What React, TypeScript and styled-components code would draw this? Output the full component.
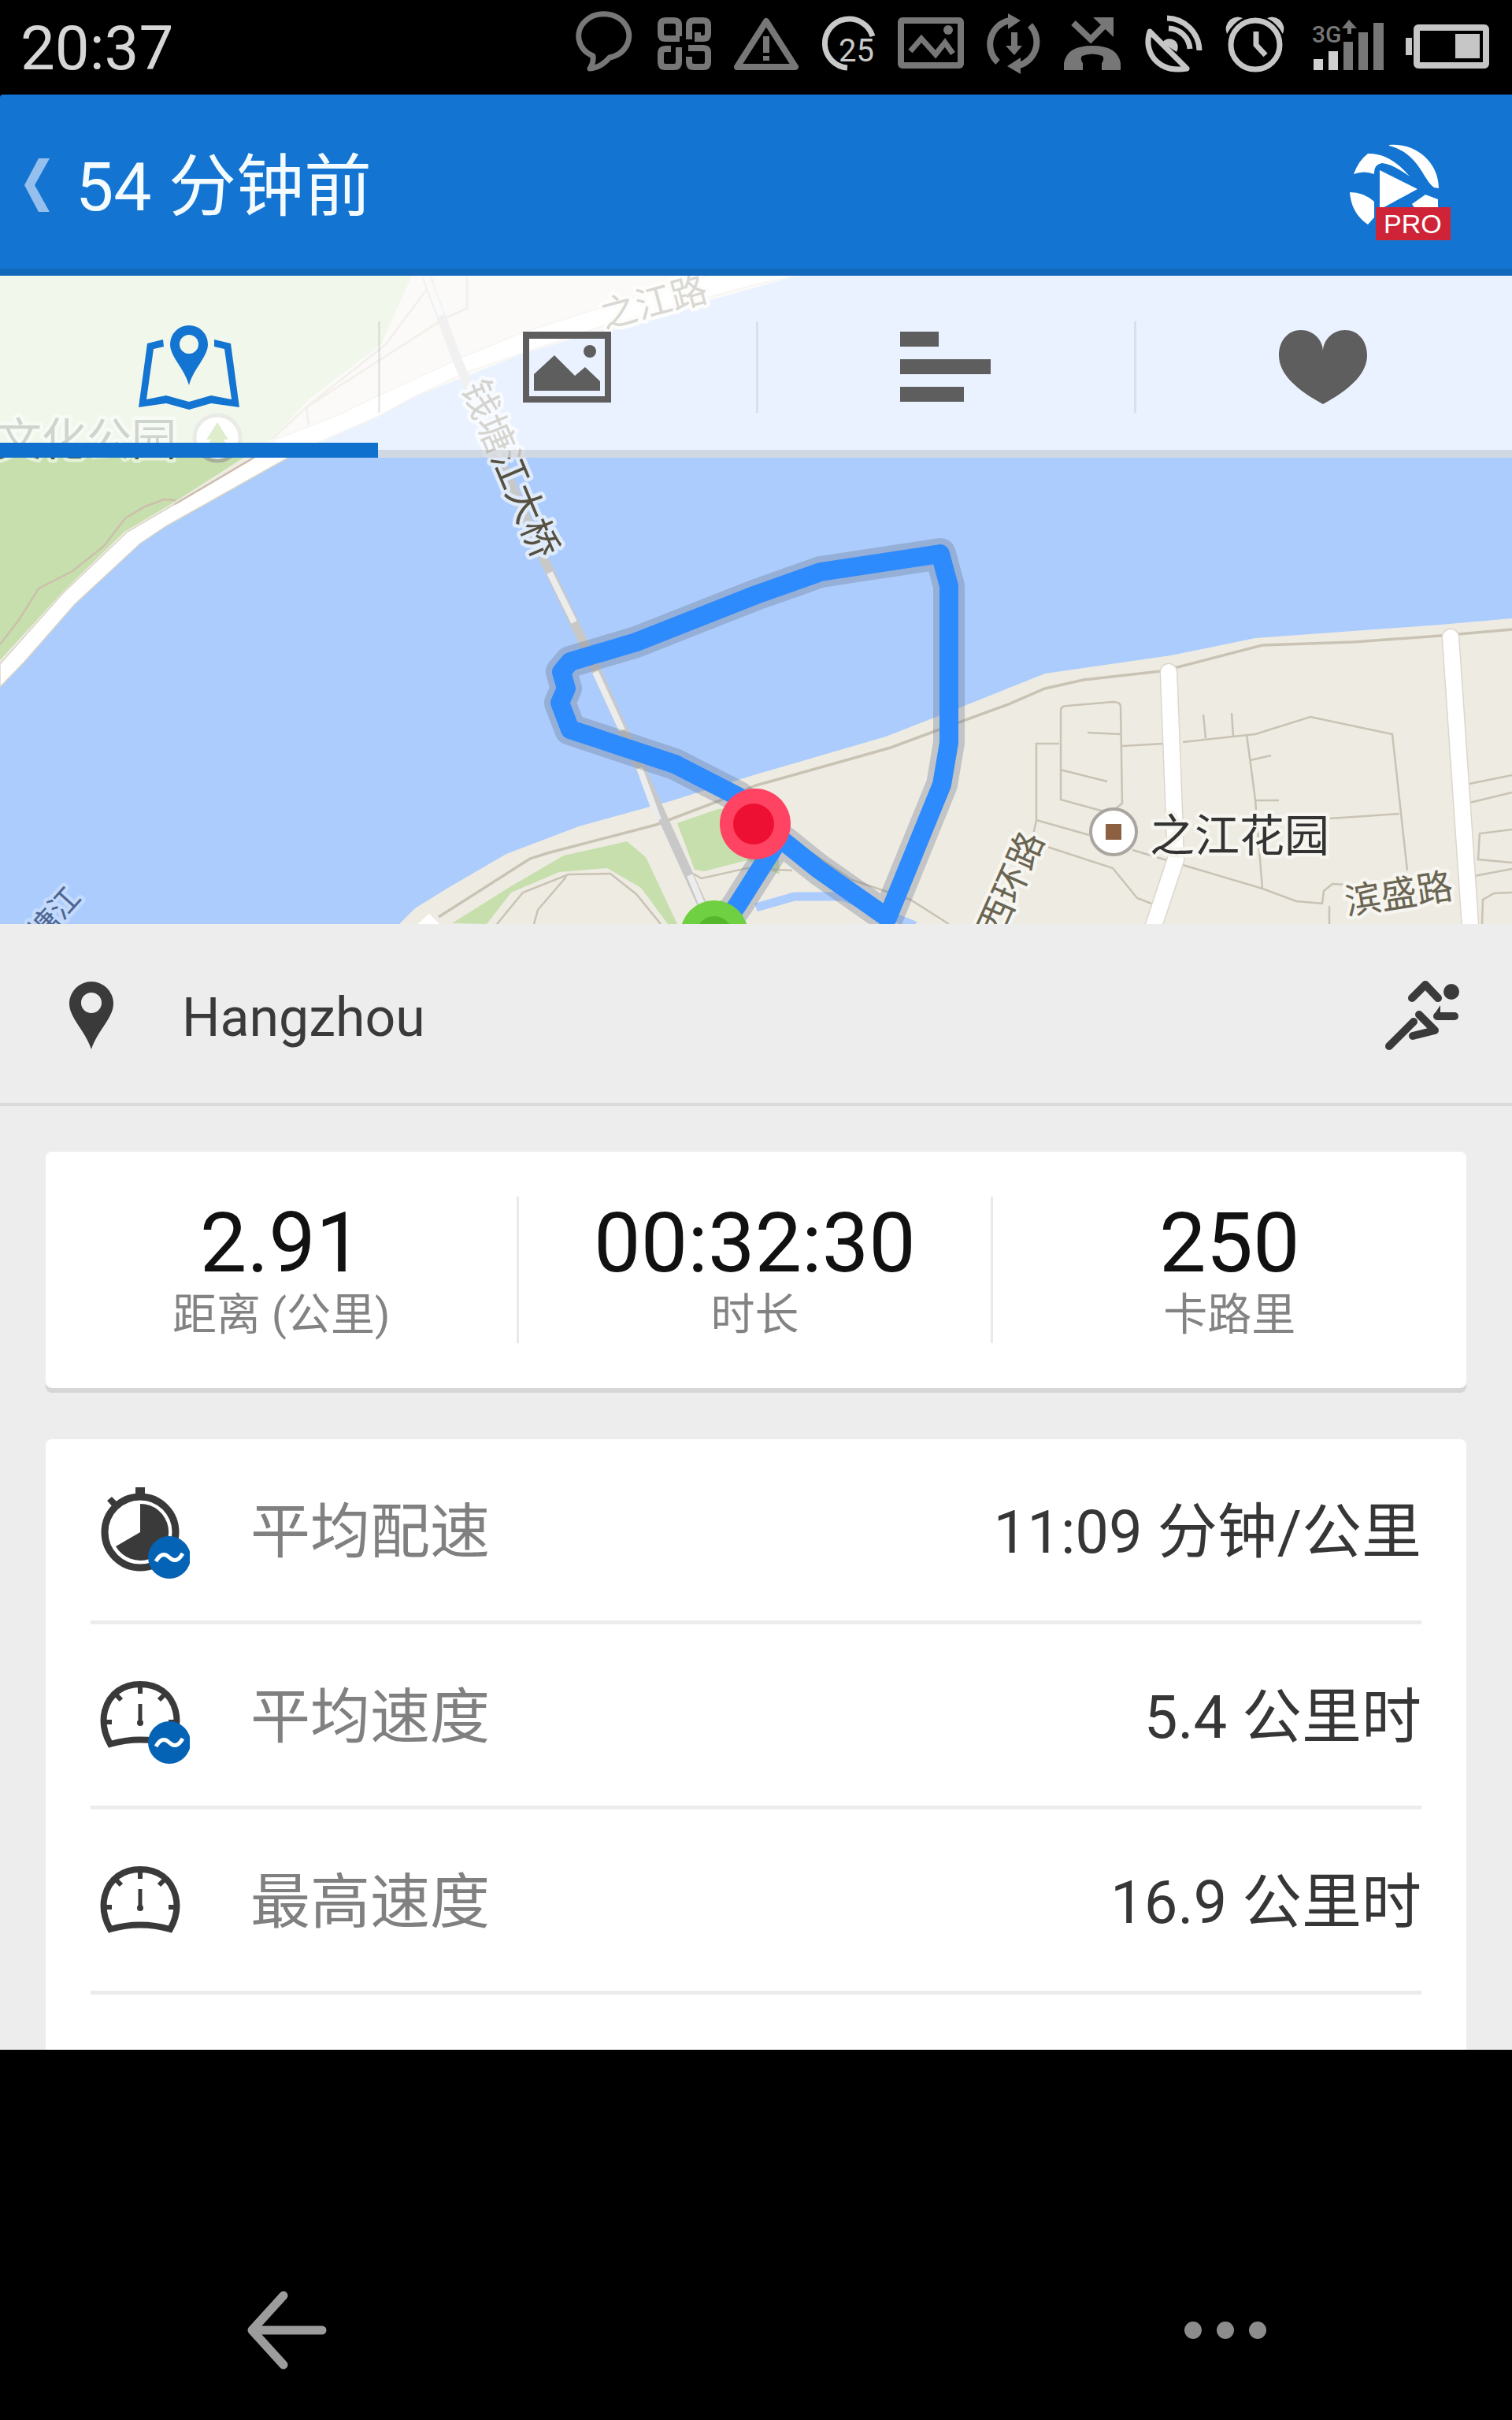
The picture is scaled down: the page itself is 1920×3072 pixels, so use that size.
import React from "react";
import styled, { createGlobalStyle } from "styled-components";

const GlobalStyle = createGlobalStyle`
  *, *::before, *::after { box-sizing: border-box; }
  body { margin: 0; background: #000; }
  button { font: inherit; border: 0; padding: 0; background: none; color: inherit; }
  h1, dl, dt, dd, p { margin: 0; font-weight: 400; }
  svg { display: block; }
`;

const Screen = styled.div`
  display: flex;
  flex-direction: column;
  min-height: 100vh;
  background: #000;
  font-family: Roboto, "Noto Sans CJK SC", sans-serif;
`;

/* ---------- status bar ---------- */

const StatusBar = styled.header`
  display: flex;
  align-items: center;
  justify-content: space-between;
  height: 120px;
  padding: 0 29px 0 26px;
`;

const Clock = styled.time`
  color: #d6d6d6;
  font-size: 78px;
  line-height: 92px;
  padding-top: 4px;
`;

const StatusIcons = styled.div`
  display: flex;
  align-items: center;
  gap: 29px;
  margin-bottom: 10px;

  svg {
    height: 80px;
    overflow: visible;
    fill: none;
    stroke: #777;
    stroke-width: 8;
  }
`;

const StatusGlyphs = () => (
  <StatusIcons>
    <svg width="72" viewBox="734 15 72 80">
      <path d="M749 87 Q754 80 753 71 A32 28 0 1 1 774 73 Q763 86 749 87Z" strokeWidth="7" strokeLinejoin="round" />
    </svg>
    <svg width="67" viewBox="835 15 67 80">
      <path d="M852 37 V45 M862 45 V32 Q862 26 856 26 H845 Q839 26 839 32 V43 Q839 49 845 49 H864" stroke="none" />
      <path d="M862 46 V32 Q862 26 856 26 H845 Q839 26 839 32 V43 Q839 49 845 49 H863" />
      <path d="M886 41 V49 H893 Q899 49 899 43 V32 Q899 26 893 26 H881 Q875 26 875 32 V50" />
      <path d="M852 62 H845 Q839 62 839 68 V79 Q839 85 845 85 H856 Q862 85 862 79 V60" />
      <path d="M874 61 H893 Q899 61 899 67 V79 Q899 85 893 85 H881 Q875 85 875 79 V72" />
    </svg>
    <svg width="84" viewBox="931 15 84 80">
      <path d="M973 27 L1010 85 H936 Z" strokeLinejoin="round" />
      <path d="M973 46 V67 M973 71 V77" />
    </svg>
    <svg width="67" viewBox="1044 15 67 80" style={{ stroke: "#c9c9c9" }}>
      <path d="M1108 46 A31 31 0 1 0 1076 86" strokeWidth="7" />
      <text x="1065" y="78" fill="#c9c9c9" stroke="none" fontSize="40">25</text>
    </svg>
    <svg width="83" viewBox="1140 15 83 80">
      <rect x="1144" y="26" width="76" height="57" rx="2" />
      <path d="M1156 65 L1170 49 L1188 69 L1200 54 L1210 68" strokeWidth="7" />
      <circle cx="1204" cy="38" r="6" fill="#777" stroke="none" />
    </svg>
    <svg width="70" viewBox="1252 15 70 80">
      <path d="M1267 79 A31 31 0 0 1 1282 26 M1308 32 A31 31 0 0 1 1294 83" />
      <path d="M1280 17 L1296 26 L1280 37Z M1296 73 V94 L1279 84Z M1277 58 H1298 L1288 70Z" fill="#777" stroke="none" />
      <path d="M1288 41 V60" />
    </svg>
    <svg width="73" viewBox="1351 15 73 80">
      <path d="M1363 29 L1385 50 L1406 29" />
      <path d="M1388 22 H1414 V47Z" fill="#777" stroke="none" />
      <path d="M1351 89 V80 Q1355 58 1387 58 Q1419 58 1423 80 V89 H1399 V80 Q1403 75 1400 71 Q1387 66 1374 71 Q1371 75 1375 80 V89Z" fill="#777" stroke="none" />
    </svg>
    <svg width="74" viewBox="1453 15 74 80" style={{ stroke: "#c6c6c6" }}>
      <path d="M1460 40 L1507 87 Q1480 92 1465 74 Q1454 59 1460 40Z" strokeWidth="7" strokeLinejoin="round" />
      <path d="M1476 54 A9 9 0 1 1 1494 66 Z" fill="#c6c6c6" stroke="none" />
      <path d="M1482 23 A42 42 0 0 1 1523 64 M1484 36 A28 28 0 0 1 1511 62" strokeWidth="7" />
    </svg>
    <svg width="76" viewBox="1556 15 76 80" style={{ stroke: "#c6c6c6" }}>
      <circle cx="1594" cy="57" r="31" strokeWidth="7" />
      <path d="M1595 40 V57 L1607 70" strokeWidth="7" />
      <path d="M1558 43 Q1554 33 1562 25 Q1570 19 1578 23 Q1566 29 1558 43Z M1629 43 Q1633 33 1625 25 Q1617 19 1609 23 Q1621 29 1629 43Z" fill="#c6c6c6" stroke="none" />
    </svg>
    <svg width="95" viewBox="1661 15 95 80">
      <g stroke="none" fill="#777">
        <path d="M1706 53 H1718 V89 H1706Z M1725 41 H1737 V89 H1725Z M1744 29 H1757 V89 H1744Z M1713 25 L1723 36 H1716 V43 H1711 V36 H1704Z" />
        <text x="1666" y="54" fontSize="30" fontWeight="500">
          3G
        </text>
        <path d="M1668 75 H1680 V89 H1668Z M1687 65 H1699 V89 H1687Z" fill="#cfcfcf" />
      </g>
    </svg>
    <svg width="106" viewBox="1785 15 106 80" style={{ stroke: "#c6c6c6" }}>
      <rect x="1799" y="35" width="88" height="48" rx="2" />
      <path d="M1785 48 H1793 V70 H1785Z M1848 43 H1879 V74 H1848Z" fill="#c6c6c6" stroke="none" />
    </svg>
  </StatusIcons>
);

/* ---------- title bar ---------- */

const TitleBar = styled.div`
  display: flex;
  align-items: center;
  justify-content: space-between;
  height: 230px;
  padding: 8px 78px 0 31px;
  background: #1375d1;
  border-bottom: 9px solid #1268ba;
  border-top-left-radius: 4px;

  > svg {
    margin-top: 20px;
  }
`;

const BackLink = styled.a`
  display: flex;
  align-items: center;
  gap: 33px;
  color: #f4fbff;
  text-decoration: none;
`;

const Title = styled.h1`
  font-size: 86px;
  line-height: 104px;
  padding-top: 6px;
`;

const Logo = () => (
  <svg width="128" height="124" viewBox="1714 182 128 124">
    <g fill="#fff">
      <path d="M1764 183 C1798 180 1827 205 1827 238 L1821 237 C1806 226 1802 194 1764 184Z" />
      <path d="M1719 220 Q1725 203 1737 194 Q1765 193 1790 223 Q1768 207 1755 206 Q1744 208 1745 220 Q1732 215 1719 220Z" />
      <path d="M1752 215 L1800 239 L1752 265Z" />
      <path d="M1714 243 Q1732 243 1745 255 V275 L1737 284 Q1716 270 1714 243Z" />
      <path d="M1793 258 L1810 246 L1826 252 V264 H1797Z" />
    </g>
    <rect x="1747" y="262" width="95" height="42" fill="#cf2437" />
    <text x="1757" y="295" fill="#fff" fontSize="34" fontFamily="Liberation Sans">PRO</text>
  </svg>
);

/* ---------- map and tabs ---------- */

const MapSection = styled.section`
  position: relative;
  overflow: hidden;
  background: #abccfd;

  > svg {
    width: 100%;
    height: auto;
  }
`;

const Tabs = styled.nav`
  position: absolute;
  inset: 0 0 auto 0;
  display: grid;
  grid-template-columns: repeat(4, 1fr);
`;

const Tab = styled.button<{ $active?: boolean }>`
  display: flex;
  align-items: center;
  justify-content: center;
  height: 231px;
  background: rgba(255, 255, 255, 0.75);
  border-bottom: ${(p) => (p.$active ? "19px solid #1070cd" : "10px solid rgba(150, 155, 160, 0.3)")};
  color: ${(p) => (p.$active ? "#1375d1" : "#5e5e5e")};
  padding-top: ${(p) => (p.$active ? "19px" : "10px")};

  &:not(:first-child)::before {
    content: "";
    width: 3px;
    height: 116px;
    margin-right: auto;
    background: rgba(120, 130, 150, 0.16);
  }

  &:not(:first-child)::after {
    content: "";
    width: 3px;
    margin-left: auto;
  }

  svg {
    fill: currentColor;
  }
`;

const road = "#c9c3b4";

const routePath =
  "M907 1190 L937 1148 L985 1072 L959 1030 L937 1011 L857 970 L724 926 L711 892 L719 874 L713 853 L724 840 L808 815 L960 755 L1042 726 L1194 703 L1205 744 V943 L1196 996 L1127 1165 L1040 1104 L985 1060";

const RouteMap = () => (
  <svg viewBox="0 350 1920 823" role="img" aria-label="路线地图" fontFamily='"Noto Sans CJK SC", sans-serif'>
    <rect y="350" width="1920" height="823" fill="#abccfd" />

    {/* north bank */}
    <path d="M0 350 H1012 L960 365 L771 417 L661 450 L594 477 L527 503 L481 528 L392 567 L364 582 L211 668 L178 690 L95 767 L31 840 L0 872Z" fill="#eeebe3" />
    <path d="M0 350 H523 L484 437 L392 507 L346 557 L306 583 L222 637 L158 675 L78 753 L0 838Z" fill="#c6dfac" />
    <path d="M0 843 L80 753 L162 675 L227 637 L318 583 L352 557 L429 527 L481 502 L588 453 L661 423 L765 390 L876 357 L900 350 H1012 L960 361 L771 412 L594 472 L527 503 L481 528 L392 567 L364 582 L211 668 L178 690 L95 767 L31 840 L0 872Z" fill="#fff" stroke="#d9d5c6" strokeWidth="1.5" />
    <g fill="none" stroke="#cdbfae" strokeWidth="2.5">
      <path d="M223 635 L208 634 L184 643 L159 658 L132 693 L92 725 L49 747 L24 787 L0 818" />
      <path d="M551 355 L490 437 L389 517 L346 557 M593 352 V392 L566 403 L490 452 L389 517 L392 540" />
      <path d="M324 580 L222 640" />
    </g>

    {/* south bank */}
    <path d="M507 1173 L527 1153 L569 1127 L643 1084 L735 1049 L851 1017 L960 983 L1125 935 L1217 899 L1327 855 L1487 832 L1594 810 L1829 793 L1920 785 V1173Z" fill="#eeebe3" />
    <path d="M574 1172 L649 1125 L716 1086 L796 1068 L820 1088 L860 1173 H848 L814 1127 L771 1102 L710 1107 L649 1133 L618 1173Z M860 1045 L912 1027 L985 1020 L990 1110 L949 1092 L894 1106 L882 1104Z" fill="#c6dfac" />
    <path d="M530 1173 L545 1160 L558 1173Z" fill="#fff" />
    <path d="M960 1152 L1009 1138 L1070 1138 L1162 1175" fill="none" stroke="#abccfd" strokeWidth="11" />
    <path d="M557 1164 L673 1090 L695 1083 L833 1047 L912 1017 L960 997 L1046 973 L1131 949 L1193 926 L1278 895 L1327 874 L1376 863 L1474 852 L1499 846 L1603 819 L1719 815 L1829 807 L1920 799" fill="none" stroke={road} strokeWidth="3.5" />
    <g fill="none" stroke={road} strokeWidth="2.5">
      <path d="M631 1173 L664 1133 L722 1110 L775 1109 L808 1135 L839 1173 M719 1113 L683 1155 L678 1173" />
      <path d="M848 1045 L876 1107 L891 1115 L949 1102 L1006 1105" />
      <path d="M1021 1076 L1082 1117 L1156 1142 L1205 1173" />
      <path d="M1347 902 Q1347 896 1355 896 L1413 891 Q1423 891 1423 897 L1425 1020 L1413 1029 H1398 L1347 1015Z" />
      <path d="M1381 930 L1423 932 M1346 977 L1406 992 M1425 947 L1477 944 M1345 944 H1316 V1041 L1312 1060 M1316 1041 L1383 1060" />
      <path d="M1330 1075 L1413 1102 L1444 1140 L1462 1147 M1438 1079 L1603 1128 L1646 1144 L1680 1147" />
      <path d="M1502 942 L1594 932 L1664 910 L1768 932 L1787 1105 M1528 907 L1531 937 M1564 905 L1566 935" />
      <path d="M1583 932 L1594 1015 L1603 1128 M1588 965 L1614 959 M1595 1016 H1624 M1689 1039 L1777 1033" />
      <path d="M1688 1173 V1150 M1679 1147 L1681 1131 L1692 1122 L1740 1125" />
      <path d="M1866 995 L1920 984 M1866 1019 L1920 1006 M1920 1053 L1879 1058 L1877 1091 L1920 1095 M1872 1112 L1920 1103 M1882 1173 L1883 1142 L1897 1134 L1920 1133" />
    </g>
    <g fill="none" strokeLinecap="round">
      <path d="M1484 853 L1491 1034 L1493 1091 L1465 1175 M1842 809 L1867 1175" stroke="#dcd7ca" strokeWidth="23" />
      <path d="M1484 853 L1491 1034 L1493 1091 L1465 1175 M1842 809 L1867 1175" stroke="#fff" strokeWidth="20" />
    </g>

    {/* bridge */}
    <g fill="none" stroke="#c8c8c8" strokeWidth="12">
      <path d="M541 350 L579 453 L686 700 L744 822 L891 1147" />
      <path d="M541 350 L560 400 M596 490 L640 590 M698 727 L729 790 M756 853 L790 927 M812 975 L836 1041 M876 1111 L891 1147" stroke="#ececec" strokeWidth="8" />
    </g>

    {/* place labels */}
    <g stroke="#dfeafa" strokeWidth="9" paintOrder="stroke" strokeLinejoin="round" textAnchor="middle" fill="#55503f" fontSize="48">
      <text transform="translate(648 595) rotate(67)" y="17">钱塘江大桥</text>
      <g stroke="#f6f5ef" fill="#6a6553" fontSize="46">
        <text transform="translate(830 383) rotate(-15)" y="17">之江路</text>
        <text transform="translate(1283 1121) rotate(-66)" y="17">西环路</text>
        <text transform="translate(1776 1134) rotate(-9)" y="17">滨盛路</text>
      </g>
      <text transform="translate(56 1174) rotate(-48)" y="14" fontSize="38" fill="#4e6591" stroke="#c3dafc">钱塘江</text>
    </g>
    <g stroke="#f6f5ef" strokeWidth="9" paintOrder="stroke" strokeLinejoin="round" fontSize="57">
      <text x="-4" y="578" fill="#3b5a3a" stroke="#e4f0d8">文化公园</text>
      <text x="1460" y="1081" fill="#333">之江花园</text>
    </g>
    <circle cx="276" cy="556" r="29" fill="#fff" stroke="#a8b09c" strokeWidth="5" />
    <path d="M276 536 L290 558 H284 L291 570 H279 V577 H273 V570 H261 L268 558 H262Z" fill="#7fb83a" />
    <circle cx="1414" cy="1056" r="29" fill="#fff" stroke="#a9a6a0" strokeWidth="4" />
    <rect x="1404" y="1046" width="20" height="20" fill="#8e6042" />

    {/* recorded route */}
    <g fill="none" strokeLinejoin="round">
      <path d={routePath} stroke="rgba(110, 120, 140, 0.34)" strokeWidth="40" />
      <path d={routePath} stroke="#2e8bfd" strokeWidth="24" />
    </g>
    <circle cx="959" cy="1046" r="45" fill="#ff4463" />
    <circle cx="957" cy="1046" r="26" fill="#ee1032" />
    <circle cx="907" cy="1186" r="43" fill="#6fd041" />
    <circle cx="907" cy="1186" r="23" fill="#55b82c" />
  </svg>
);

/* ---------- summary ---------- */

const Content = styled.main`
  background: #ededed;
  color: #3a3a3a;
`;

const LocationRow = styled.div`
  display: flex;
  align-items: center;
  height: 231px;
  padding: 4px 67px 0 88px;
  border-bottom: 4px solid #dadada;
  font-size: 68px;
  line-height: 80px;
`;

const City = styled.p`
  flex: 1;
  padding: 6px 0 0 87px;
`;

const Card = styled.dl`
  margin: 58px 58px 0;
  background: #fff;
  border-radius: 8px;
`;

const SummaryCard = styled(Card)`
  display: grid;
  grid-template-columns: repeat(3, 1fr);
  padding: 57px 0;
  box-shadow: 0 6px 0 #d6d6d6;
`;

const Stat = styled.div`
  display: flex;
  flex-direction: column-reverse;
  align-items: center;
  justify-content: flex-end;
  height: 186px;

  &:not(:last-child) {
    border-right: 3px solid #e9e9e9;
  }

  dd {
    color: #111;
    font-size: 106px;
    line-height: 118px;
  }

  dt {
    color: #838383;
    font-size: 56px;
    line-height: 64px;
  }
`;

const DetailCard = styled(Card)`
  margin-top: 65px;
  padding: 0 57px 70px;
  border-radius: 8px 8px 0 0;
`;

const Detail = styled.div`
  display: flex;
  align-items: center;
  height: 235px;
  padding-top: 6px;
  border-bottom: 5px solid #ececec;
  font-size: 76px;
  line-height: 90px;

  svg {
    margin-left: 10px;
  }

  dt {
    flex: 1;
    padding-left: 77px;
    color: #808080;
  }

  dd {
    color: #363636;
  }
`;

const Badge = () => (
  <g>
    <circle cx="88" cy="99" r="27" fill="#0463b4" />
    <path d="M71 104 Q79 90 88 99 Q97 108 105 94" fill="none" stroke="#fff" strokeWidth="5" />
  </g>
);

const StopwatchIcon = () => (
  <svg width="116" height="138" viewBox="-2 -2 116 138">
    <circle cx="51" cy="67" r="45" fill="none" stroke="#3a3a3a" strokeWidth="9" />
    <path d="M45 10 H57 V24 H45Z M9 27 L15 22 L24 31 L18 37Z" fill="#3a3a3a" />
    <path d="M51 67 V31 A36 36 0 1 1 20 85Z" fill="#3a3a3a" />
    <Badge />
  </svg>
);

const GaugeIcon = ({ average }: { average?: boolean }) => (
  <svg width="116" height="138" viewBox="-2 -2 116 138">
    <g fill="none" stroke="#3a3a3a">
      <path d="M13 101 Q1 80 6 59 C12 36 30 25 51 25 C73 25 90 36 96 59 Q101 80 89 101 Q51 90 13 101Z" strokeWidth="8" />
      <path d="M51 27 V37 M5 73 H15 M87 73 H97 M21 39 L27 45 M81 39 L75 45" strokeWidth="6" />
      <path d="M51 50 V72" strokeWidth="5" />
    </g>
    <circle cx="51" cy="74" r="4" fill="#3a3a3a" />
    {average && <Badge />}
  </svg>
);

const details = [
  { label: "平均配速", value: "11:09 分钟/公里", icon: <StopwatchIcon /> },
  { label: "平均速度", value: "5.4 公里时", icon: <GaugeIcon average /> },
  { label: "最高速度", value: "16.9 公里时", icon: <GaugeIcon /> },
];

const stats = [
  { label: "距离 (公里)", value: "2.91" },
  { label: "时长", value: "00:32:30" },
  { label: "卡路里", value: "250" },
];

/* ---------- system navigation ---------- */

const SystemNav = styled.nav`
  display: flex;
  align-items: center;
  justify-content: space-between;
  height: 228px;
  margin-top: auto;
  padding: 0 312px;
`;

export default function App() {
  return (
    <Screen>
      <GlobalStyle />
      <StatusBar>
        <Clock>20:37</Clock>
        <StatusGlyphs />
      </StatusBar>

      <TitleBar>
        <BackLink href="#">
          <svg width="32" height="68" viewBox="0 0 32 68" fill="#95c0ed">
            <path d="M18 0 H32 L13 34 L32 68 H18 L0 34Z" />
          </svg>
          <Title>54 分钟前</Title>
        </BackLink>
        <Logo />
      </TitleBar>

      <MapSection>
        <RouteMap />
        <Tabs>
          <Tab $active aria-label="地图">
            <svg width="128" height="108" viewBox="176 411 128 108">
              <path fillRule="evenodd" d="M240 412 A24 24 0 0 1 264 436 C264 452 246 466 240 488 C234 466 216 452 216 436 A24 24 0 0 1 240 412Z M240 424 A12 12 0 1 0 240 448 A12 12 0 1 0 240 424Z" />
              <path d="M207 430 L187 435 L176 516 L211 511 L240 519 L268 511 L304 516 L293 435 L272 430 V439 L285 442 L294 506 L268 501 L240 509 L211 501 L186 506 L195 442 L208 439Z" />
            </svg>
          </Tab>
          <Tab aria-label="照片">
            <svg width="112" height="90" viewBox="664 420 112 90">
              <path fillRule="evenodd" d="M664 420 H776 V510 H664Z M672 429 V502 H768 V429Z" />
              <path d="M678 495 V474 L704 450 L730 476 L743 465 L762 483 V495Z" />
              <circle cx="749" cy="445" r="8" />
            </svg>
          </Tab>
          <Tab aria-label="统计">
            <svg width="115" height="91" viewBox="1142 420 115 91">
              <path d="M1142 421 H1191 V440 H1142Z M1142 456 H1257 V475 H1142Z M1142 491 H1223 V510 H1142Z" />
            </svg>
          </Tab>
          <Tab aria-label="心率">
            <svg width="112" height="94" viewBox="1624 419 112 94">
              <path d="M1680 446 C1680 432 1668 419 1652 419 C1636 419 1624 432 1624 451 C1624 474 1645 494 1680 513 C1715 494 1736 474 1736 451 C1736 432 1724 419 1708 419 C1692 419 1680 432 1680 446Z" />
            </svg>
          </Tab>
        </Tabs>
      </MapSection>

      <Content>
        <LocationRow>
          <svg width="56" height="86" viewBox="0 0 56 86" fill="#3a3a3a">
            <path fillRule="evenodd" d="M28 0 A28 28 0 0 1 56 28 C56 46 36 62 28 86 C20 62 0 46 0 28 A28 28 0 0 1 28 0Z M28 14 A13 13 0 1 0 28 40 A13 13 0 1 0 28 14Z" />
          </svg>
          <City>Hangzhou</City>
          <svg width="94" height="88" viewBox="1758 1245 94 88" fill="none" stroke="#3a3a3a" strokeWidth="10" strokeLinecap="round" strokeLinejoin="round">
            <circle cx="1842" cy="1259" r="10" fill="#3a3a3a" stroke="none" />
            <path d="M1792 1267 L1809 1250 L1825 1267" />
            <path d="M1846 1290 H1824" />
            <path d="M1820 1288 L1828 1276 V1290Z" fill="#3a3a3a" stroke="none" />
            <path d="M1801 1288 L1821 1308 L1793 1315" />
            <path d="M1794 1297 L1763 1328" />
          </svg>
        </LocationRow>

        <SummaryCard>
          {stats.map((s) => (
            <Stat key={s.label}>
              <dt>{s.label}</dt>
              <dd>{s.value}</dd>
            </Stat>
          ))}
        </SummaryCard>

        <DetailCard>
          {details.map((d) => (
            <Detail key={d.label}>
              {d.icon}
              <dt>{d.label}</dt>
              <dd>{d.value}</dd>
            </Detail>
          ))}
        </DetailCard>
      </Content>

      <SystemNav>
        <button aria-label="返回">
          <svg width="104" height="100" viewBox="0 0 104 100" fill="none" stroke="#9c9c9c" strokeWidth="11" strokeLinecap="round" strokeLinejoin="round">
            <path d="M48 6 L8 50 L48 94 M8 50 H97" />
          </svg>
        </button>
        <button aria-label="更多">
          <svg width="104" height="22" viewBox="0 0 104 22" fill="#8c8c8c">
            <circle cx="11" cy="11" r="11" />
            <circle cx="52" cy="11" r="11" />
            <circle cx="93" cy="11" r="11" />
          </svg>
        </button>
      </SystemNav>
    </Screen>
  );
}
